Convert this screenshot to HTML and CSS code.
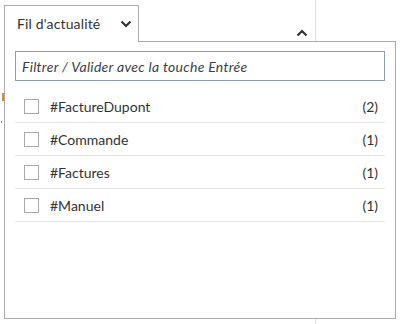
FILE: index.html
```html
<!DOCTYPE html>
<html lang="fr">
    <head>
        <meta charset="UTF-8">
        <meta name="viewport" content="width=device-width, initial-scale=1.0">
        <title>Fil d'actualité</title>
        <link rel="stylesheet" href="styles.css">
    </head>

    <body>
        <div class="behind">
            <span class="mark-orange"></span>
            <span class="mark-blue"></span>
        </div>

        <div class="dropdown">
            <div class="dropdown-head">
                <div class="tab">
                    <span class="tab-label">Fil d'actualité</span>
                    <svg class="chevron-down" width="12" height="8" viewBox="0 0 12 8">
                        <path d="M1.5 1.5 L6 6 L10.5 1.5" fill="none" stroke="#333" stroke-width="2.2"/>
                    </svg>
                </div>
                <svg class="chevron-up" width="12" height="8" viewBox="0 0 12 8">
                    <path d="M1.5 6.5 L6 2 L10.5 6.5" fill="none" stroke="#333" stroke-width="2.2"/>
                </svg>
            </div>

            <div class="panel">
                <input type="text" class="filter" placeholder="Filtrer / Valider avec la touche Entrée" autocomplete="off" autofocus>

                <!-- liste des tags -->
                <ul class="tags">
                    <li class="tag-row">
                        <span class="check"></span>
                        <span class="tag-name">#FactureDupont</span>
                        <span class="tag-count">(2)</span>
                    </li>
                    <li class="tag-row">
                        <span class="check"></span>
                        <span class="tag-name">#Commande</span>
                        <span class="tag-count">(1)</span>
                    </li>
                    <li class="tag-row">
                        <span class="check"></span>
                        <span class="tag-name">#Factures</span>
                        <span class="tag-count">(1)</span>
                    </li>
                    <li class="tag-row">
                        <span class="check"></span>
                        <span class="tag-name">#Manuel</span>
                        <span class="tag-count">(1)</span>
                    </li>
                </ul>
            </div>
        </div>
    </body>
</html>
```

FILE: styles.css
```css
html,
body {
    margin: 0;
    padding: 0;
}

body {
    font-family: Lato, "Noto Sans", sans-serif;
    font-size: 14px;
    color: #333;
    background-color: #fff;
    background-image: linear-gradient(#e3e3e3, #e3e3e3);
    background-repeat: no-repeat;
    background-size: 1px 100%;
    background-position: 315px 0;
    height: 324px;
    position: relative;
}

.behind .mark-orange {
    position: absolute;
    left: 2px;
    top: 93px;
    width: 2px;
    height: 8px;
    background-color: #d9882f;
}

.behind .mark-blue {
    position: absolute;
    left: 1px;
    top: 121px;
    width: 1px;
    height: 2px;
    background-color: #6aa9d8;
}

.dropdown {
    padding: 5px 0 0 4px;
    width: 392px;
    position: relative;
}

.dropdown-head {
    display: flex;
    align-items: flex-end;
    position: relative;
    z-index: 1;
    margin-bottom: -1px;
}

.tab {
    box-sizing: border-box;
    width: 135px;
    height: 37px;
    border: 1px solid #aaa;
    border-bottom: none;
    background-color: #fff;
    display: flex;
    align-items: center;
    padding: 0 0 2px 12px;
}

.tab-label {
    flex: 1;
    letter-spacing: 0.15px;
}

.chevron-down {
    margin-right: 6px;
    margin-top: 2px;
}

.chevron-up {
    margin-left: 157px;
    margin-bottom: 5px;
}

.panel {
    box-sizing: border-box;
    width: 392px;
    height: 278px;
    border: 1px solid #aaa;
    background-color: #fff;
    padding: 9px 10px 0 10px;
}

.filter {
    box-sizing: border-box;
    display: block;
    width: 370px;
    height: 30px;
    margin: 0;
    padding: 0 5px 0 6px;
    border: 1px solid #8d9eab;
    font-family: Lato, "Noto Sans", sans-serif;
    font-size: 14px;
    font-style: italic;
    letter-spacing: 0.3px;
    color: #333;
    caret-color: #222;
    outline: none;
}

.filter::placeholder {
    color: #3a3f45;
}

.tags {
    list-style: none;
    margin: 9px 0 0 0;
    padding: 0;
}

.tag-row {
    display: flex;
    align-items: center;
    height: 32px;
    border-bottom: 1px solid #e4e4e4;
    padding: 0 7px 0 9px;
}

.check {
    box-sizing: border-box;
    width: 15px;
    height: 15px;
    border: 1px solid #aaa;
    margin-right: 11px;
}

.tag-name {
    flex: 1;
}

.tag-count {
    text-align: right;
}
```
